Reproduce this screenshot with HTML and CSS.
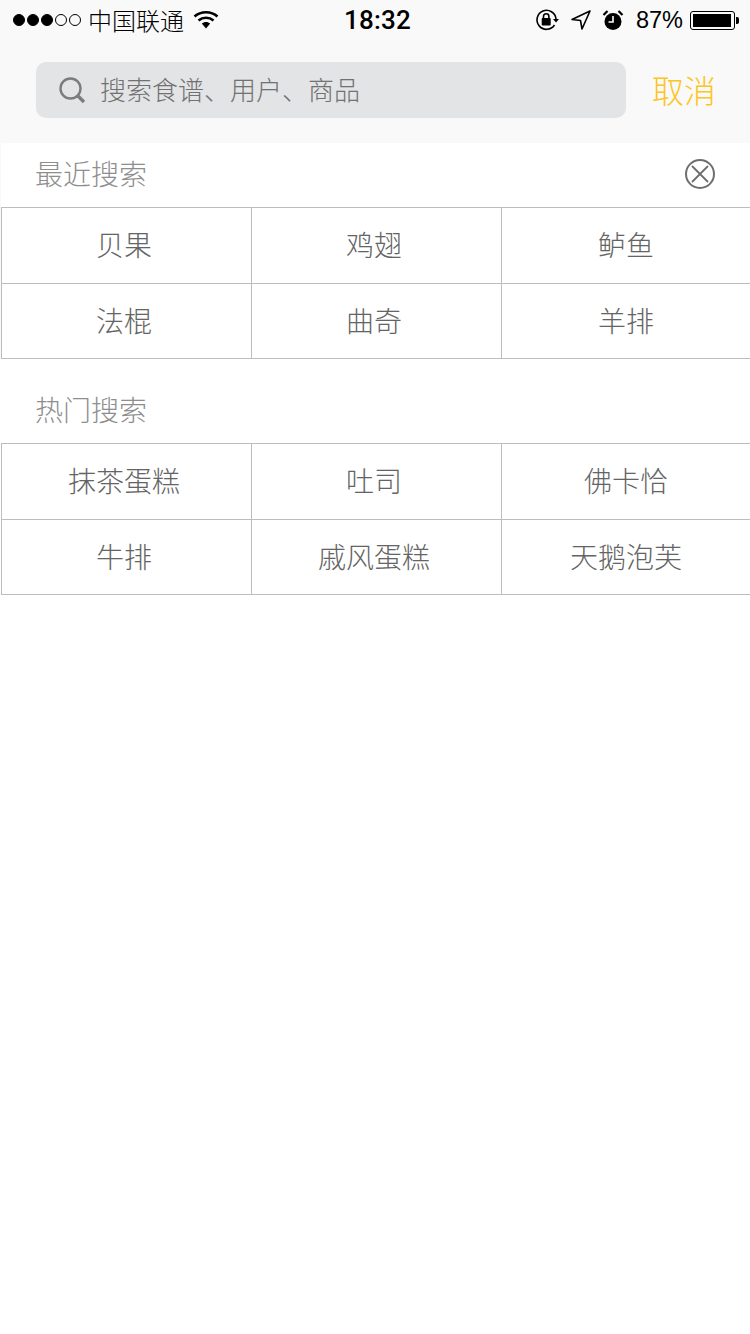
FILE: index.html
```html
<!DOCTYPE html>
<html lang="zh-CN">
<head>
<meta charset="utf-8">
<title>搜索</title>
<link rel="stylesheet" href="styles.css">
</head>
<body>
<header class="top">
  <div class="status">
    <div class="status-left">
      <span class="signal"><i class="dot on"></i><i class="dot on"></i><i class="dot on"></i><i class="dot"></i><i class="dot"></i></span>
      <span class="carrier">中国联通</span>
      <svg class="wifi" width="26" height="20" viewBox="0 0 26 20"><path d="M1.500 6.500C7.800.9 18.200.9 24.500 6.500" fill="none" stroke="#000" stroke-width="2.600"/><path d="M5.500 10.500C9.800 6.900 16.200 6.900 20.500 10.500" fill="none" stroke="#000" stroke-width="2.600"/><path d="M8.800 13.600C11.300 11.500 14.700 11.500 17.200 13.600L13 18.500Z" fill="#000"/></svg>
    </div>
    <div class="time">18:32</div>
    <div class="status-right">
      <svg width="26" height="24" viewBox="0 0 26 24"><path d="M22 11A9.500 9.500 0 1 0 20.500 17" fill="none" stroke="#000" stroke-width="1.600"/><path d="M19 11h6l-3 3.500z" fill="#000"/><rect x="7.700" y="10" width="9" height="7.500" rx="1" fill="#000"/><path d="M9.500 10.500V8.500a2.700 2.700 0 0 1 5.400 0V10.500" fill="none" stroke="#000" stroke-width="1.600"/></svg>
      <svg class="gps" width="22" height="22" viewBox="0 0 22 22"><path d="M20 2 2 10.500l8.500 1 1.500 8.500z" fill="none" stroke="#000" stroke-width="1.600" stroke-linejoin="round"/></svg>
      <svg class="alarm" width="22" height="22" viewBox="0 0 22 22"><circle cx="11" cy="12.500" r="8.500" fill="#000"/><path d="M1.500 6 5.500 2M20.500 6 16.500 2" stroke="#000" stroke-width="2.200"/><path d="M11 7v6H6.500" fill="none" stroke="#fff" stroke-width="1.600"/></svg>
      <span class="pct">87%</span>
      <span class="battery"><span class="battery-fill"></span></span><span class="battery-tip"></span>
    </div>
  </div>
  <div class="search-row">
    <div class="search">
      <svg width="28" height="28" viewBox="0 0 28 28"><circle cx="12.500" cy="12.500" r="10" fill="none" stroke="#7c7c7c" stroke-width="2.400"/><path d="M19.500 19.500 26 26" stroke="#7c7c7c" stroke-width="3.400"/></svg>
      <span class="placeholder">搜索食谱、用户、商品</span>
    </div>
    <span class="cancel">取消</span>
  </div>
</header>
<main>
  <section class="recent">
    <div class="title-row">
      <h2 class="title">最近搜索</h2>
      <svg width="32" height="32" viewBox="0 0 32 32"><circle cx="16" cy="16" r="14" fill="none" stroke="#6e6e6e" stroke-width="2"/><path d="M8 8 24 24M24 8 8 24" stroke="#6e6e6e" stroke-width="1.800"/></svg>
    </div>
    <div class="grid">
      <div class="cell">贝果</div><div class="cell">鸡翅</div><div class="cell">鲈鱼</div>
      <div class="cell">法棍</div><div class="cell">曲奇</div><div class="cell">羊排</div>
    </div>
  </section>
  <section class="hot">
    <div class="title-row">
      <h2 class="title">热门搜索</h2>
    </div>
    <div class="grid">
      <div class="cell">抹茶蛋糕</div><div class="cell">吐司</div><div class="cell">佛卡恰</div>
      <div class="cell">牛排</div><div class="cell">戚风蛋糕</div><div class="cell">天鹅泡芙</div>
    </div>
  </section>
</main>
</body>
</html>
```
FILE: styles.css
```css
* { box-sizing: border-box; }
html, body { margin: 0; padding: 0; }
body {
  width: 750px;
  height: 1334px;
  overflow: hidden;
  background: #fff;
  font-family: "Noto Sans CJK SC", "Liberation Sans", sans-serif;
  font-weight: 300;
}
.top { background: #f9f9f9; height: 143px; }
.status {
  height: 40px;
  padding: 0 11px 0 13px;
  display: flex;
  align-items: center;
  justify-content: space-between;
  position: relative;
  color: #000;
}
.status-left, .status-right { display: flex; align-items: center; }
.signal { display: flex; gap: 2px; }
.dot { width: 12px; height: 12px; border-radius: 50%; border: 1px solid #000; display: block; }
.dot.on { background: #000; }
.carrier { font-size: 24px; margin-left: 7px; line-height: 40px; }
.wifi { margin-left: 9px; }
.time {
  position: absolute;
  left: 344px;
  top: 0;
  font: 500 26px/40px Roboto, "Liberation Sans", sans-serif;
  letter-spacing: 0.2px;
}
.status-right svg { display: block; }
.gps { margin-left: 10px; }
.alarm { margin-left: 10px; }
.pct { font: 400 23.500px/40px "Liberation Sans", sans-serif; margin-left: 12px; }
.battery {
  margin-left: 7px;
  width: 45px;
  height: 19px;
  border: 1px solid #000;
  border-radius: 3px;
  padding: 2px;
  display: block;
}
.battery-fill { display: block; height: 100%; width: 38px; background: #000; }
.battery-tip { width: 3px; height: 7px; background: #000; border-radius: 0 2px 2px 0; margin-left: 1px; }
.search-row {
  display: flex;
  align-items: center;
  padding: 22px 0 0 36px;
}
.search {
  width: 590px;
  height: 56px;
  background: #e3e4e6;
  border-radius: 10px;
  display: flex;
  align-items: center;
  padding-left: 22px;
  flex: none;
}
.placeholder { font-size: 26px; color: #717171; margin-left: 14px; padding-bottom: 4px; }
.cancel { color: #fdc521; font-size: 32px; margin-left: 26px; white-space: nowrap; padding-bottom: 2px; }
.recent { border-left: 1px solid #f9f9f9; }
.title-row {
  height: 64px;
  display: flex;
  align-items: center;
  justify-content: space-between;
  padding: 0 34px 4px 34px;
}
.recent .title-row svg { display: block; margin-top: 2px; }
.title { margin: 0; font-size: 28px; font-weight: 300; color: #8e8e8e; }
.hot { margin-top: 20px; }
.hot .title-row { padding-left: 35px; }
.grid {
  margin-left: 1px;
  display: grid;
  grid-template-columns: 250px 250px 1fr;
  grid-template-rows: 76px 75px;
  border-bottom: 1px solid #bdbdbd;
  height: 152px;
}
.recent .grid { margin-left: 0; }
.cell {
  border-top: 1px solid #bdbdbd;
  border-left: 1px solid #bdbdbd;
  display: flex;
  align-items: center;
  justify-content: center;
  font-size: 28px;
  color: #646464;
  padding: 0 5px 3px 0;
}
.cell:nth-child(3n) { padding-right: 0; }
```
